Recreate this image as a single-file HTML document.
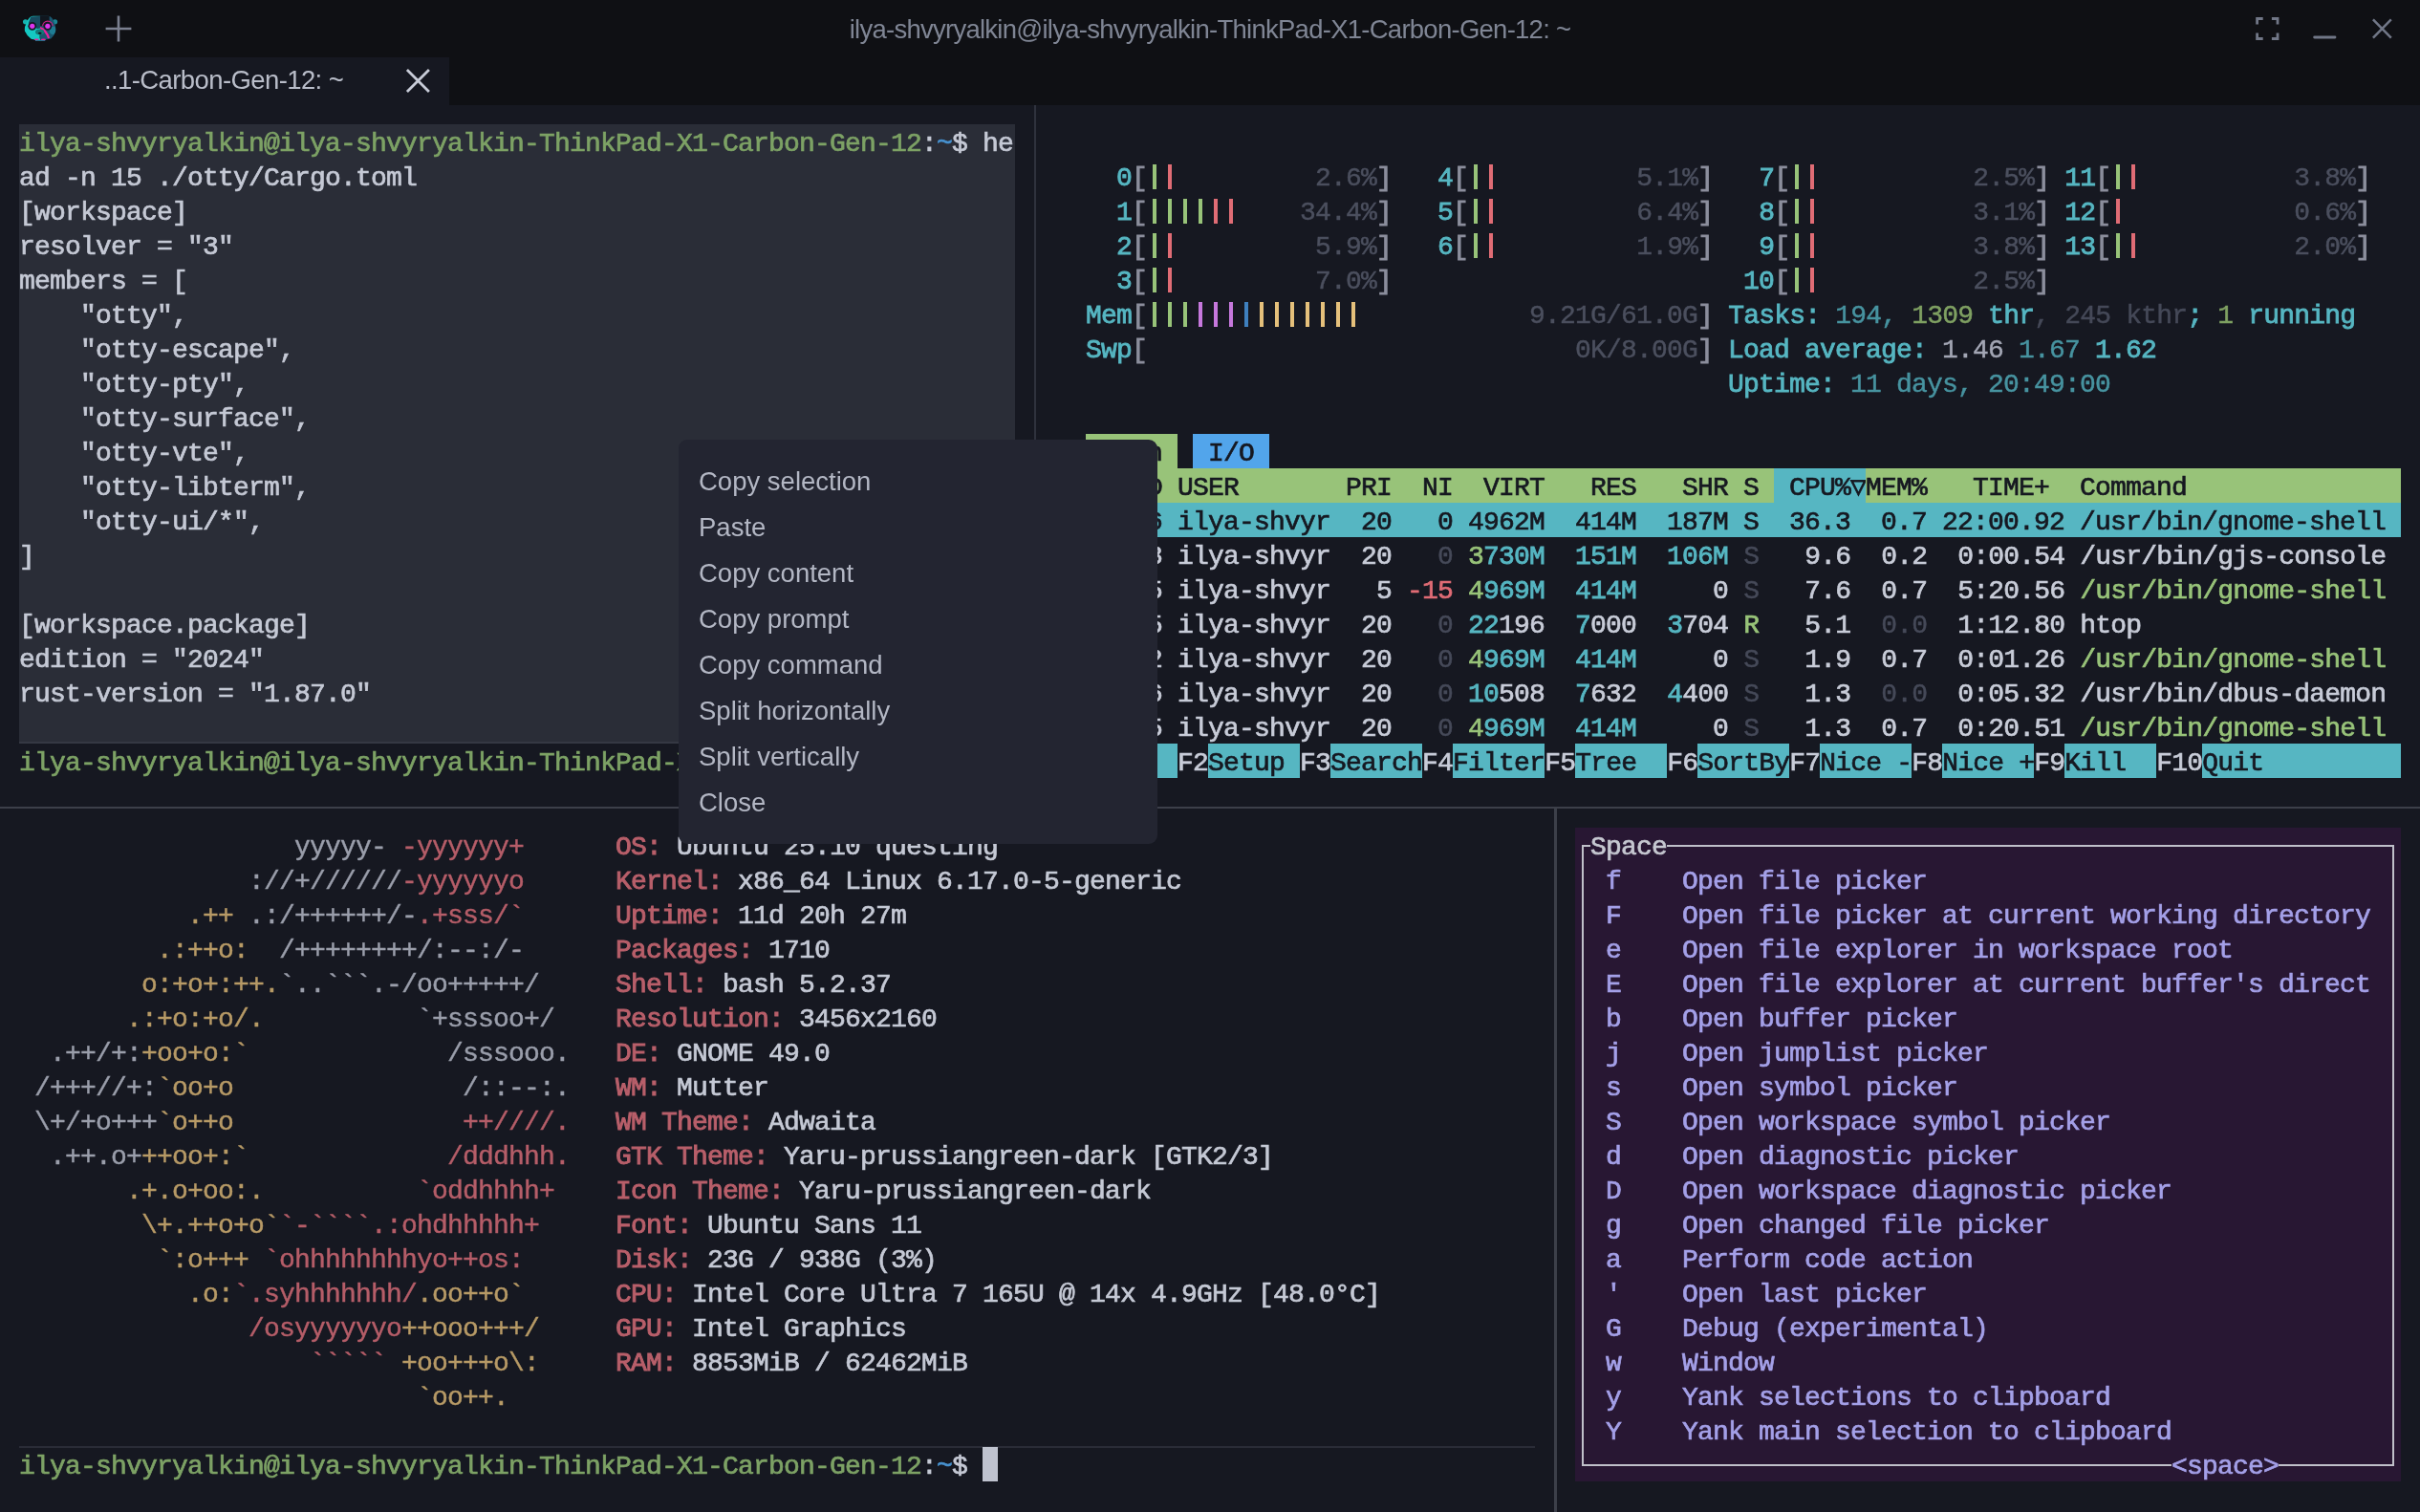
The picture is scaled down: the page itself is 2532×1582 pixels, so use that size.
<!DOCTYPE html>
<html><head><meta charset="utf-8"><title>otty</title>
<style>
*{margin:0;padding:0;box-sizing:border-box}
html,body{width:2532px;height:1582px;overflow:hidden;background:#161821}
body{position:relative;font-family:"Liberation Sans",sans-serif}
.abs{position:absolute}
/* window chrome */
#top{position:absolute;left:0;top:0;width:2532px;height:110px;background:#0f1014}
#tab{position:absolute;left:0;top:60px;width:470px;height:50px;background:#161821}
#tabt{will-change:transform;position:absolute;left:108.7px;top:62px;height:44px;line-height:44px;font-size:27.5px;letter-spacing:-0.6px;color:#b9bdc9;white-space:pre}
#title{will-change:transform;position:absolute;left:0;top:8.5px;width:2532px;height:44px;line-height:44px;text-align:center;font-size:27.5px;letter-spacing:-0.74px;color:#7f8594;white-space:pre}
.vd{position:absolute;width:2px;background:#2c2f3a}
.hd{position:absolute;height:2px;background:#3c3f49}
/* terminal panes */
.tp{position:absolute;will-change:transform;font-family:"Liberation Mono",monospace;font-size:28px;letter-spacing:-0.8027px;color:#c5c9d5;white-space:pre;-webkit-text-stroke:0.7px}
.r{height:36px;line-height:42.07px}
.r span{display:inline-block;height:36px;vertical-align:top}
.blk{position:absolute;left:20px;top:129.6px;width:1042px;height:648.4px;background:#2a2d37;border-bottom:2px solid #353843}
.G{color:#7da265}
.B{color:#4791ce}
.W{color:#c8ccd8}
.c{color:#56b6c2;-webkit-text-stroke:0.85px}
.cd{color:#4793a0;-webkit-text-stroke:0.45px}
.g{color:#98c379}
.gd{color:#7fa062;-webkit-text-stroke:0.45px}
.rd{color:#e06c75}
.xg{color:transparent;background:linear-gradient(90deg,transparent 6px,#98c379 6px,#98c379 10.2px,transparent 10.2px) 0 5.6px/16px 26.4px repeat-x}
.xr{color:transparent;background:linear-gradient(90deg,transparent 6px,#e06c75 6px,#e06c75 10.2px,transparent 10.2px) 0 5.6px/16px 26.4px repeat-x}
.xy{color:transparent;background:linear-gradient(90deg,transparent 6px,#e5c07b 6px,#e5c07b 10.2px,transparent 10.2px) 0 5.6px/16px 26.4px repeat-x}
.xp{color:transparent;background:linear-gradient(90deg,transparent 6px,#c678dd 6px,#c678dd 10.2px,transparent 10.2px) 0 5.6px/16px 26.4px repeat-x}
.xb{color:transparent;background:linear-gradient(90deg,transparent 6px,#3f80bf 6px,#3f80bf 10.2px,transparent 10.2px) 0 5.6px/16px 26.4px repeat-x}
.k{color:#8b8e9c;-webkit-text-stroke:0.9px}
.d{color:#4b4f5e;-webkit-text-stroke:0.45px}
.dd{color:#454958;-webkit-text-stroke:0.45px}
.w{color:#a3a6b4;-webkit-text-stroke:0.45px}
.hg{background:#98c379;color:#161821}
.hb{background:#52a5eb;color:#161821}
.hc{background:#56b6c2;color:#161821}
.hs{background:#56b6c2;color:#161821}
.wn{color:#9a9eab;-webkit-text-stroke:0.45px}
.rn{color:#b55d68;-webkit-text-stroke:0.45px}
.rl{color:#b85f6a;-webkit-text-stroke:0.95px}
.yn{color:#b79a66;-webkit-text-stroke:0.45px}
.cur{background:#bfc3cf;width:16px}
.hx{color:#a4a0e8}
.bx{color:#c6c8d1;background:#281733}
.hxbg{position:absolute;left:1648px;top:866px;width:864px;height:684px;background:#281733}
.hxbox{position:absolute;left:1655px;top:884px;width:850px;height:650px;border:2.4px solid #bfc0c9}
.hxm1{position:absolute;left:1664px;top:870px;width:80px;height:28px;background:#281733}
.hxm2{position:absolute;left:2272px;top:1518px;width:112px;height:28px;background:#281733}
/* context menu */
#menu{will-change:transform;position:absolute;left:710px;top:460px;width:501px;height:423px;background:#232531;border-radius:9px;padding:19.5px 0}
#menu div{height:48px;line-height:48px;padding-left:21px;font-size:27.5px;color:#b3b7c4;white-space:pre}
.sep{position:absolute;left:20px;top:1513px;width:1586px;height:2px;background:#2a2c37}
</style></head>
<body>
<div id="top"></div>
<div id="tab"></div>
<svg class="abs" style="left:16px;top:8px" width="56" height="44" viewBox="0 0 1924 1512">
<defs><clipPath id="hd"><path d="M640 295Q480 330 410 540Q300 740 340 840Q420 1020 570 1125L700 1150L740 1200L1060 1200L1100 1150L1280 1115Q1410 1000 1455 830Q1480 720 1400 540Q1340 330 1180 295Z"/></clipPath></defs>
<ellipse cx="365" cy="510" rx="92" ry="92" fill="#16b4b0"/><ellipse cx="1430" cy="510" rx="88" ry="92" fill="#1a8594"/>
<g clip-path="url(#hd)">
<rect x="250" y="250" width="645" height="1000" fill="#14c9c2"/>
<rect x="895" y="250" width="645" height="1000" fill="#1a566e"/>
<path d="M560 330L895 310L895 735L780 765L640 560L470 560Z" fill="#184a5e"/>
<rect x="895" y="300" width="330" height="360" fill="#10161e"/>
<ellipse cx="1350" cy="820" rx="120" ry="150" fill="#1e7c93"/>
<path d="M985 665A180 180 0 0 1 1345 665" stroke="#c21f80" stroke-width="45" fill="none"/>
<path d="M895 685Q1140 760 1240 1095L1170 1105Q1090 870 895 765Z" fill="#f01e9c"/>
<circle cx="610" cy="665" r="150" fill="#161827"/><circle cx="1165" cy="665" r="150" fill="#161827"/>
<ellipse cx="880" cy="875" rx="158" ry="98" fill="#127a78"/>
<ellipse cx="885" cy="918" rx="62" ry="36" fill="#0b1418"/>
<path d="M885 960V1110" stroke="#12686a" stroke-width="34"/>
<ellipse cx="760" cy="1145" rx="88" ry="30" fill="#f01e9c"/><ellipse cx="1010" cy="1145" rx="88" ry="30" fill="#f01e9c"/>
<path d="M720 1170L1080 1170L1060 1200L740 1200Z" fill="#1d7088"/>
</g>
<circle cx="610" cy="665" r="90" fill="#dd35ee"/><circle cx="1165" cy="665" r="90" fill="#dd35ee"/>
</svg>
<svg class="abs" style="left:108px;top:14px" width="32" height="32" viewBox="0 0 32 32"><path d="M16 2.6V29.4M2.6 16H29.4" stroke="#7b8090" stroke-width="2.6" fill="none"/></svg>
<div id="title">ilya-shvyryalkin@ilya-shvyryalkin-ThinkPad-X1-Carbon-Gen-12: ~</div>
<div id="tabt">..1-Carbon-Gen-12: ~</div>
<svg class="abs" style="left:422px;top:70px" width="30" height="30" viewBox="0 0 30 30"><path d="M3.9 3.1L26.9 26.1M26.9 3.1L3.9 26.1" stroke="#c8ccd8" stroke-width="2.8" fill="none"/></svg>
<svg class="abs" style="left:2350px;top:10px" width="170" height="40" viewBox="0 0 170 40">
<path d="M11.6 15.6V9.5H17.7M26.9 9.5H33V15.6M33 24.4V30.5H26.9M17.7 30.5H11.6V24.4" stroke="#717787" stroke-width="2.8" fill="none"/>
<path d="M71.6 29H93" stroke="#717787" stroke-width="2.8" stroke-linecap="round" fill="none"/>
<path d="M132.9 10.3L151.8 29.6M151.8 10.3L132.9 29.6" stroke="#717787" stroke-width="2.5" fill="none"/>
</svg>
<div class="vd" style="left:1082px;top:110px;height:734px;background:#2f323d"></div>
<div class="hd" style="left:0;top:844px;width:2532px"></div>
<div class="vd" style="left:1626px;top:846px;height:736px;width:2.5px;background:#3c3f49"></div>
<div class="sep"></div>

<div class="blk"></div>
<div class="tp " style="left:20px;top:130px"><div class="r"><span class="G">ilya-shvyryalkin@ilya-shvyryalkin-ThinkPad-X1-Carbon-Gen-12</span>:<span class="B">~</span>$ he</div><div class="r">ad -n 15 ./otty/Cargo.toml</div><div class="r">[workspace]</div><div class="r">resolver = "3"</div><div class="r">members = [</div><div class="r">    "otty",</div><div class="r">    "otty-escape",</div><div class="r">    "otty-pty",</div><div class="r">    "otty-surface",</div><div class="r">    "otty-vte",</div><div class="r">    "otty-libterm",</div><div class="r">    "otty-ui/*",</div><div class="r">]</div><div class="r"> </div><div class="r">[workspace.package]</div><div class="r">edition = "2024"</div><div class="r">rust-version = "1.87.0"</div><div class="r"> </div><div class="r"><span class="G">ilya-shvyryalkin@ilya-shvyryalkin-ThinkPad-X1-Carbon-Gen-12</span>:<span class="B">~</span>$ </div></div>
<div class="tp " style="left:1104px;top:130px"><div class="r"> </div><div class="r"><span class="c">    0</span><span class="k">[</span><span class="xg">|</span><span class="xr">|</span><span class="d">         2.6%</span><span class="k">]</span><span class="c">   4</span><span class="k">[</span><span class="xg">|</span><span class="xr">|</span><span class="d">         5.1%</span><span class="k">]</span><span class="c">   7</span><span class="k">[</span><span class="xg">|</span><span class="xr">|</span><span class="d">          2.5%</span><span class="k">]</span><span class="c"> 11</span><span class="k">[</span><span class="xg">|</span><span class="xr">|</span><span class="d">          3.8%</span><span class="k">]</span></div><div class="r"><span class="c">    1</span><span class="k">[</span><span class="xg">||||</span><span class="xr">||</span><span class="d">    34.4%</span><span class="k">]</span><span class="c">   5</span><span class="k">[</span><span class="xg">|</span><span class="xr">|</span><span class="d">         6.4%</span><span class="k">]</span><span class="c">   8</span><span class="k">[</span><span class="xg">|</span><span class="xr">|</span><span class="d">          3.1%</span><span class="k">]</span><span class="c"> 12</span><span class="k">[</span><span class="xr">|</span><span class="d">           0.6%</span><span class="k">]</span></div><div class="r"><span class="c">    2</span><span class="k">[</span><span class="xg">|</span><span class="xr">|</span><span class="d">         5.9%</span><span class="k">]</span><span class="c">   6</span><span class="k">[</span><span class="xg">|</span><span class="xr">|</span><span class="d">         1.9%</span><span class="k">]</span><span class="c">   9</span><span class="k">[</span><span class="xg">|</span><span class="xr">|</span><span class="d">          3.8%</span><span class="k">]</span><span class="c"> 13</span><span class="k">[</span><span class="xg">|</span><span class="xr">|</span><span class="d">          2.0%</span><span class="k">]</span></div><div class="r"><span class="c">    3</span><span class="k">[</span><span class="xg">|</span><span class="xr">|</span><span class="d">         7.0%</span><span class="k">]</span>                     <span class="c">  10</span><span class="k">[</span><span class="xg">|</span><span class="xr">|</span><span class="d">          2.5%</span><span class="k">]</span></div><div class="r"><span class="c">  Mem</span><span class="k">[</span><span class="xg">|||</span><span class="xp">|||</span><span class="xb">|</span><span class="xy">|||||||</span><span class="d">           9.21G/61.0G</span><span class="k">]</span><span class="c"> Tasks: </span><span class="cd">194, </span><span class="gd">1309</span><span class="c"> thr</span><span class="dd">, 245 kthr</span><span class="c">; </span><span class="gd">1</span><span class="c"> running</span></div><div class="r"><span class="c">  Swp</span><span class="k">[</span><span class="d">                            0K/8.00G</span><span class="k">]</span><span class="c"> Load average: </span><span class="w">1.46 </span><span class="cd">1.67 </span><span class="c">1.62</span></div><div class="r">                                            <span class="c">Uptime: </span><span class="cd">11 days, 20:49:00</span></div><div class="r"> </div><div class="r">  <span class="hg"> Main </span> <span class="hb"> I/O </span></div><div class="r"><span class="hg">    PID USER       PRI  NI  VIRT   RES   SHR S </span><span class="hc"> CPU%▽</span><span class="hg">MEM%   TIME+  Command              </span></div><div class="r"><span class="hs">   3456 ilya-shvyr  20   0 4962M  414M  187M S  36.3  0.7 22:00.92 /usr/bin/gnome-shell </span></div><div class="r"><span class="W"> 912643 ilya-shvyr  20 </span><span class="dd">  0 </span><span class="g">3</span><span class="c">730M</span>  <span class="c">151M</span>  <span class="c">106M</span> <span class="dd">S </span><span class="W">  9.6 </span><span class="W"> 0.2 </span><span class="W"> 0:00.54 </span><span class="W">/usr/bin/gjs-console</span></div><div class="r"><span class="W">   3465 ilya-shvyr   5 </span><span class="rd">-15 </span><span class="g">4</span><span class="c">969M</span>  <span class="c">414M</span> <span class="W">    0</span> <span class="dd">S </span><span class="W">  7.6 </span><span class="W"> 0.7 </span><span class="W"> 5:20.56 </span><span class="g">/usr/bin/gnome-shell</span></div><div class="r"><span class="W"> 905215 ilya-shvyr  20 </span><span class="dd">  0 </span><span class="c">22</span><span class="W">196</span>  <span class="c">7</span><span class="W">000</span>  <span class="c">3</span><span class="W">704</span> <span class="g">R </span><span class="W">  5.1 </span><span class="dd"> 0.0 </span><span class="W"> 1:12.80 </span><span class="W">htop</span></div><div class="r"><span class="W">   3472 ilya-shvyr  20 </span><span class="dd">  0 </span><span class="g">4</span><span class="c">969M</span>  <span class="c">414M</span> <span class="W">    0</span> <span class="dd">S </span><span class="W">  1.9 </span><span class="W"> 0.7 </span><span class="W"> 0:01.26 </span><span class="g">/usr/bin/gnome-shell</span></div><div class="r"><span class="W">   3116 ilya-shvyr  20 </span><span class="dd">  0 </span><span class="c">10</span><span class="W">508</span>  <span class="c">7</span><span class="W">632</span>  <span class="c">4</span><span class="W">400</span> <span class="dd">S </span><span class="W">  1.3 </span><span class="dd"> 0.0 </span><span class="W"> 0:05.32 </span><span class="W">/usr/bin/dbus-daemon</span></div><div class="r"><span class="W">   3475 ilya-shvyr  20 </span><span class="dd">  0 </span><span class="g">4</span><span class="c">969M</span>  <span class="c">414M</span> <span class="W">    0</span> <span class="dd">S </span><span class="W">  1.3 </span><span class="W"> 0.7 </span><span class="W"> 0:20.51 </span><span class="g">/usr/bin/gnome-shell</span></div><div class="r"><span class="W">F1</span><span class="hs">Help  </span><span class="W">F2</span><span class="hs">Setup </span><span class="W">F3</span><span class="hs">Search</span><span class="W">F4</span><span class="hs">Filter</span><span class="W">F5</span><span class="hs">Tree  </span><span class="W">F6</span><span class="hs">SortBy</span><span class="W">F7</span><span class="hs">Nice -</span><span class="W">F8</span><span class="hs">Nice +</span><span class="W">F9</span><span class="hs">Kill  </span><span class="W">F10</span><span class="hs">Quit</span><span class="hs">         </span></div></div>
<div class="tp " style="left:20px;top:866px"><div class="r"><span class="wn">                  yyyyy- </span><span class="rn">-yyyyyy+</span>      <span class="rl">OS:</span> Ubuntu 25.10 questing</div><div class="r"><span class="wn">               ://+//////</span><span class="rn">-yyyyyyo</span>      <span class="rl">Kernel:</span> x86_64 Linux 6.17.0-5-generic</div><div class="r"><span class="yn">           .++ </span><span class="wn">.:/++++++/-</span><span class="rn">.+sss/`</span>      <span class="rl">Uptime:</span> 11d 20h 27m</div><div class="r"><span class="yn">         .:++o:  </span><span class="wn">/++++++++/:--:/-</span>      <span class="rl">Packages:</span> 1710</div><div class="r"><span class="yn">        o:+o+:++.</span><span class="wn">`..```.-/oo+++++/</span>     <span class="rl">Shell:</span> bash 5.2.37</div><div class="r"><span class="yn">       .:+o:+o/.</span><span class="wn">          `+sssoo+/</span>    <span class="rl">Resolution:</span> 3456x2160</div><div class="r"><span class="wn">  .++/+:</span><span class="yn">+oo+o:`</span><span class="wn">             /sssooo.</span>   <span class="rl">DE:</span> GNOME 49.0</div><div class="r"><span class="wn"> /+++//+:</span><span class="yn">`oo+o</span><span class="wn">               /::--:.</span>   <span class="rl">WM:</span> Mutter</div><div class="r"><span class="wn"> \+/+o+++</span><span class="yn">`o++o</span><span class="rn">               ++////.</span>   <span class="rl">WM Theme:</span> Adwaita</div><div class="r"><span class="wn">  .++.o+</span><span class="yn">++oo+:`</span><span class="rn">             /dddhhh.</span>   <span class="rl">GTK Theme:</span> Yaru-prussiangreen-dark [GTK2/3]</div><div class="r"><span class="yn">       .+.o+oo:.</span><span class="rn">          `oddhhhh+</span>    <span class="rl">Icon Theme:</span> Yaru-prussiangreen-dark</div><div class="r"><span class="yn">        \+.++o+o`</span><span class="rn">`-````.:ohdhhhhh+</span>     <span class="rl">Font:</span> Ubuntu Sans 11</div><div class="r"><span class="yn">         `:o+++ </span><span class="rn">`ohhhhhhhhyo++os:</span>      <span class="rl">Disk:</span> 23G / 938G (3%)</div><div class="r"><span class="yn">           .o:</span><span class="rn">`.syhhhhhhh/</span><span class="yn">.oo++o`</span>      <span class="rl">CPU:</span> Intel Core Ultra 7 165U @ 14x 4.9GHz [48.0°C]</div><div class="r"><span class="rn">               /osyyyyyyo</span><span class="yn">++ooo+++/</span>     <span class="rl">GPU:</span> Intel Graphics</div><div class="r"><span class="rn">                   ````` </span><span class="yn">+oo+++o\:</span>     <span class="rl">RAM:</span> 8853MiB / 62462MiB</div><div class="r"><span class="yn">                          `oo++.</span></div><div class="r"> </div><div class="r"><span class="G">ilya-shvyryalkin@ilya-shvyryalkin-ThinkPad-X1-Carbon-Gen-12</span>:<span class="B">~</span>$ <span class="cur"> </span></div></div>
<div class="hxbg"></div><div class="hxbox"></div><div class="hxm1"></div><div class="hxm2"></div>
<div class="tp hx" style="left:1648px;top:866px"><div class="r"> <span class="bx">Space</span></div><div class="r">  f    Open file picker</div><div class="r">  F    Open file picker at current working directory</div><div class="r">  e    Open file explorer in workspace root</div><div class="r">  E    Open file explorer at current buffer's direct</div><div class="r">  b    Open buffer picker</div><div class="r">  j    Open jumplist picker</div><div class="r">  s    Open symbol picker</div><div class="r">  S    Open workspace symbol picker</div><div class="r">  d    Open diagnostic picker</div><div class="r">  D    Open workspace diagnostic picker</div><div class="r">  g    Open changed file picker</div><div class="r">  a    Perform code action</div><div class="r">  '    Open last picker</div><div class="r">  G    Debug (experimental)</div><div class="r">  w    Window</div><div class="r">  y    Yank selections to clipboard</div><div class="r">  Y    Yank main selection to clipboard</div><div class="r">                                       &lt;space&gt;</div></div>
<div id="menu"><div>Copy selection</div><div>Paste</div><div>Copy content</div><div>Copy prompt</div><div>Copy command</div><div>Split horizontally</div><div>Split vertically</div><div>Close</div></div>

</body></html>
